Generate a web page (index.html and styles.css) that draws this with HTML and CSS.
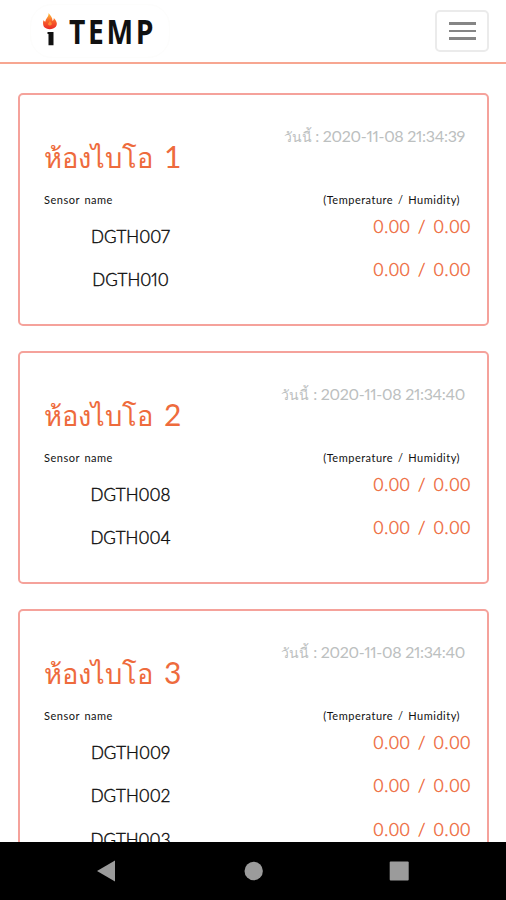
FILE: index.html
```html
<!DOCTYPE html>
<html lang="th">
<head>
<meta charset="utf-8">
<title>iTEMP</title>
<link rel="stylesheet" href="styles.css">
</head>
<body>
<header class="header">
  <div class="logo">
    <svg class="torch" width="16" height="34" viewBox="0 0 16 34" aria-hidden="true">
      <defs>
        <linearGradient id="flame" x1="0" y1="0" x2="0" y2="1">
          <stop offset="0" stop-color="#ffc43d"/>
          <stop offset=".5" stop-color="#f9622a"/>
          <stop offset="1" stop-color="#e92a26"/>
        </linearGradient>
      </defs>
      <path fill="url(#flame)" d="M5.500 0C7 2 9.800 4.500 9.500 8c.8-.4 1.400-1.600 1.300-3 3 2.900 4 6.300 2 8.700-3 3.300-9.300 3.200-11.900 0C-.2 11.600-.2 8.900.6 7c.4 1 1 1.500 1.900 1.600C2.500 5.500 6 4 5.500 0z"/>
      <path fill="#fb8b35" d="M7 7.500c.3 2 2.300 1.800 1.700 4-.7 1.300-2.900 1.200-3.600 0C4.500 10.200 6.600 9.500 7 7.500z"/>
      <path fill="#111" d="M4.500 19h6v13.300H5.500V21H4.500z"/>
    </svg>
    <span class="logo-text">TEMP</span>
  </div>
  <button class="toggle" aria-label="Menu"><span></span><span></span><span></span></button>
</header>
<main class="list">
  <section class="card">
    <p class="date"><span class="day">วันนี้</span> : 2020-11-08 21:34:39</p>
    <h2 class="room">ห้องไบโอ <span class="num">1</span></h2>
    <div class="labels"><span class="l-name">Sensor name</span><span class="l-value">(Temperature / Humidity)</span></div>
    <div class="row"><span class="name">DGTH007</span><span class="value">0.00 / 0.00</span></div>
    <div class="row"><span class="name">DGTH010</span><span class="value">0.00 / 0.00</span></div>
  </section>
  <section class="card">
    <p class="date"><span class="day">วันนี้</span> : 2020-11-08 21:34:40</p>
    <h2 class="room">ห้องไบโอ <span class="num">2</span></h2>
    <div class="labels"><span class="l-name">Sensor name</span><span class="l-value">(Temperature / Humidity)</span></div>
    <div class="row"><span class="name">DGTH008</span><span class="value">0.00 / 0.00</span></div>
    <div class="row"><span class="name">DGTH004</span><span class="value">0.00 / 0.00</span></div>
  </section>
  <section class="card">
    <p class="date"><span class="day">วันนี้</span> : 2020-11-08 21:34:40</p>
    <h2 class="room">ห้องไบโอ <span class="num">3</span></h2>
    <div class="labels"><span class="l-name">Sensor name</span><span class="l-value">(Temperature / Humidity)</span></div>
    <div class="row"><span class="name">DGTH009</span><span class="value">0.00 / 0.00</span></div>
    <div class="row"><span class="name">DGTH002</span><span class="value">0.00 / 0.00</span></div>
    <div class="row"><span class="name">DGTH003</span><span class="value">0.00 / 0.00</span></div>
  </section>
</main>
<nav class="navbar">
  <svg width="506" height="58" viewBox="0 0 506 58" fill="#9b9b9b" aria-hidden="true">
    <path d="M97 29l18-10.500v21z"/>
    <circle cx="253.700" cy="29" r="9.200"/>
    <rect x="389.700" y="19.500" width="19" height="19" rx="1"/>
  </svg>
</nav>
</body>
</html>
```
FILE: styles.css
```css
* { box-sizing: border-box; }
body {
  margin: 0;
  height: 900px;
  overflow: hidden;
  display: flex;
  flex-direction: column;
  background: #fff;
  color: #111;
  font-family: Lato, "Noto Sans", sans-serif;
}
.header {
  flex: none;
  height: 64px;
  padding: 0 17px 0 30px;
  display: flex;
  justify-content: space-between;
  border-bottom: 2px solid #f7a691;
}
.logo {
  width: 140px;
  height: 54px;
  margin-top: 4px;
  padding: 8px 0 0 12px;
  display: flex;
  border-radius: 22px;
  border: 1px solid #fdfdfc;
}
.torch { flex: none; }
.logo-text {
  margin-left: 10px;
  font: 700 34px/37px "Open Sans", sans-serif;
  letter-spacing: 3.200px;
  transform: scaleX(.83);
  transform-origin: left;
}
.toggle {
  width: 54px;
  height: 42px;
  margin-top: 10px;
  padding: 0;
  display: flex;
  flex-direction: column;
  align-items: center;
  justify-content: center;
  gap: 5px;
  background: #fff;
  border: 2px solid #ebebeb;
  border-radius: 5px;
}
.toggle span { width: 27px; height: 2.500px; background: #858585; }
.list {
  flex: 1;
  min-height: 0;
  overflow: hidden;
  padding: 29px 17px 0 18px;
  display: flex;
  flex-direction: column;
  gap: 25px;
}
.card {
  flex: none;
  min-height: 233px;
  padding: 30px 17px 25px 24px;
  border: 2px solid #f5a29b;
  border-radius: 5px;
}
.date {
  margin: 0 5px 0 0;
  text-align: right;
  font-size: 16px;
  line-height: 22px;
  font-feature-settings: "pnum";
  letter-spacing: -.3px;
  color: #bcc0c0;
  white-space: nowrap;
}
.day { font-size: 14px; letter-spacing: 0; }
.room {
  margin: -7px 0 0;
  font-size: 27.300px;
  font-weight: 400;
  line-height: 32px;
  color: #ee6b3d;
  white-space: nowrap;
}
.num { margin-left: 4px; font-size: 30px; line-height: 30px; }
.labels {
  height: 15px;
  margin-top: 18px;
  padding-right: 10px;
  display: flex;
  justify-content: space-between;
  font-size: 11px;
  line-height: 16px;
  letter-spacing: .5px;
  word-spacing: 1.500px;
}
.row {
  height: 43.300px;
  display: flex;
  justify-content: space-between;
  font-size: 17px;
}
.name {
  width: 173px;
  padding-top: 18px;
  line-height: 24px;
  text-align: center;
  font-feature-settings: "pnum";
}
.value {
  padding-top: 8px;
  line-height: 24px;
  letter-spacing: .9px;
  word-spacing: 2px;
  margin-right: -1px;
  color: #ee6b3d;
}
.name, .value { font-weight: 300; -webkit-text-stroke: .45px currentColor; }
.navbar { flex: none; height: 58px; background: #000; }
.navbar svg { display: block; }
```
